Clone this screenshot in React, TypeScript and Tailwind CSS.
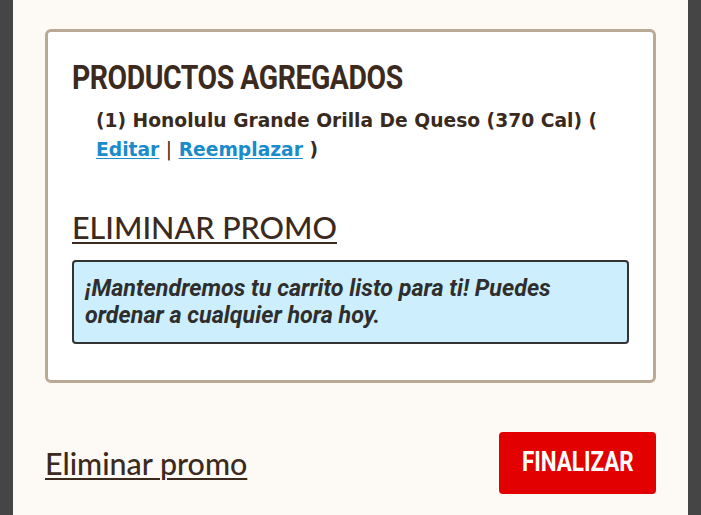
import type { ReactElement } from "react";

export default function App(): ReactElement {
  return (
    <div className="flex min-h-[515px] w-[701px] bg-[#454545] px-[13px]">
      <div className="flex-1 bg-[#fdf9f4] px-8 pt-[29px] text-[#3b2a1d]">
        <section className="rounded-md border-[3px] border-[#b9a995] bg-white px-6 pt-[28px] pb-[36px]">
          <h2 className="origin-left scale-x-[0.86] whitespace-nowrap font-['Roboto',sans-serif] text-[33px] leading-[36px] font-bold tracking-[-0.5px]">
            PRODUCTOS AGREGADOS
          </h2>
          <p className="mt-[10px] pl-6 font-['DejaVu_Sans',sans-serif] text-[18.7px] leading-[29px] font-bold text-[#3a2a1e]">
            (1) Honolulu Grande Orilla De Queso (370 Cal) (
            <br />
            <a href="#" className="text-[#1a8bcb] underline underline-offset-2">
              Editar
            </a>{" "}
            <span className="font-normal">|</span>{" "}
            <a href="#" className="text-[#1a8bcb] underline underline-offset-2">
              Reemplazar
            </a>{" "}
            )
          </p>
          <h3 className="mt-[46px] font-['Lato',sans-serif] text-[30.5px] leading-[34px] font-medium underline decoration-2 underline-offset-[3px]">
            ELIMINAR PROMO
          </h3>
          <div className="mt-[16px] rounded border-2 border-[#333333] bg-[#cdeefc] px-[11px] py-[13px] font-['Roboto',sans-serif] text-[23.3px] leading-[27px] font-bold italic text-[#2e2e2e]">
            ¡Mantendremos tu carrito listo para ti! Puedes ordenar a cualquier hora hoy.
          </div>
        </section>
        <div className="mt-[49px] flex items-center justify-between">
          <a
            href="#"
            className="font-['Lato',sans-serif] text-[30.4px] leading-[34px] font-medium underline decoration-2 underline-offset-[3px]"
          >
            Eliminar promo
          </a>
          <button className="h-[62px] w-[157px] rounded bg-[#e20000] font-['Roboto',sans-serif] text-white">
            <span className="inline-block scale-x-[0.8] text-[28px] leading-none font-bold">FINALIZAR</span>
          </button>
        </div>
      </div>
    </div>
  );
}
